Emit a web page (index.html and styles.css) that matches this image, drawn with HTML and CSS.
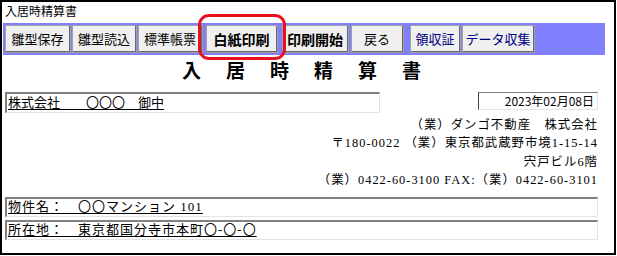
FILE: index.html
```html
<!DOCTYPE html>
<html lang="ja">
  <head>
    <meta charset="UTF-8" />
    <title>入居時精算書</title>
    <link rel="stylesheet" href="styles.css">
  </head>
  <body>
    <div class="frame">
      <div class="app_title">入居時精算書</div>

      <div class="toolbar">
        <button class="btn w66">雛型保存</button>
        <button class="btn w65">雛型読込</button>
        <button class="btn w65 gap2">標準帳票</button>
        <span class="mark_wrap">
          <button class="btn w72 bold">白紙印刷</button>
          <span class="mark_ring"></span>
        </span>
        <button class="btn w67 bold gap4">印刷開始</button>
        <button class="btn w53">戻る</button>
        <button class="btn w51 navy gap6">領収証</button>
        <button class="btn w73 navy">データ収集</button>
      </div>

      <div class="doc">
        <h1 class="doc_title">入居時精算書</h1>

        <div class="row_top">
          <div class="inset company"><u>株式会社　　〇〇〇　御中</u></div>
          <div class="date_box">2023年02月08日</div>
        </div>

        <div class="sender">
          <p>（業）ダンゴ不動産　株式会社</p>
          <p>〒180-0022 （業）東京都武蔵野市境1-15-14</p>
          <p>宍戸ビル6階</p>
          <p>（業）0422-60-3100 FAX:（業）0422-60-3101</p>
        </div>

        <div class="inset line"><u>物件名：　〇〇マンション 101</u></div>
        <div class="inset line"><u>所在地：　東京都国分寺市本町〇-〇-〇</u></div>
      </div>
    </div>
  </body>
</html>
```

FILE: styles.css
```css
* {
  box-sizing: border-box;
}
body {
  margin: 0;
  background: #fff;
  font-family: "Noto Sans CJK JP", sans-serif;
  color: #000;
}
.frame {
  width: 616px;
  height: 255px;
  border: 2px solid #000;
  padding-left: 1px;
}
.app_title {
  font-size: 12px;
  line-height: 15px;
  height: 21px;
  padding: 1px 0 0 2px;
}

/* toolbar */
.toolbar {
  width: 602px;
  height: 32px;
  background: #8080ff;
  display: flex;
  align-items: center;
  padding: 0 2px;
}
.btn {
  height: 28px;
  margin: 0 1px 0 0;
  padding: 0;
  font-family: "Noto Sans CJK JP", sans-serif;
  font-size: 13px;
  color: #000;
  background: #f0f0f0;
  border-top: 1px solid #fff;
  border-left: 1px solid #fff;
  border-right: 2px solid #696969;
  border-bottom: 2px solid #696969;
  outline: 1px solid #a0a0a0;
  outline-offset: -1px;
}
.btn.bold {
  font-weight: bold;
  font-size: 14px;
}
.btn.navy {
  color: #000080;
}
.btn.gap2 { margin-right: 3px; }
.btn.gap4 { margin-right: 2px; }
.btn.gap6 { margin-left: 5px; }
.w51 { width: 51px; }
.w53 { width: 53px; }
.w65 { width: 65px; }
.w66 { width: 66px; }
.w67 { width: 67px; }
.w72 { width: 72px; }
.w73 { width: 73px; }

.mark_wrap {
  position: relative;
  display: flex;
  margin-right: 4px;
}
.mark_wrap .btn {
  margin: 0;
}
.mark_ring {
  position: absolute;
  left: -8px;
  right: -8px;
  top: -11px;
  bottom: -7px;
  border: 3px solid #e8121e;
  border-radius: 11px;
}

/* document */
.doc {
  padding: 0 16px 0 2px;
}
.doc_title {
  margin: 4px 0 0;
  padding-left: 25px;
  text-align: center;
  font-size: 19px;
  line-height: 22px;
  letter-spacing: 25px;
  font-weight: bold;
}
.row_top {
  display: flex;
  justify-content: space-between;
  align-items: flex-start;
  margin-top: 11px;
}
.inset {
  border-top: 2px solid #808080;
  border-left: 2px solid #808080;
  border-right: 1px solid #e3e3e3;
  border-bottom: 1px solid #e3e3e3;
  font-size: 13px;
  line-height: 16px;
  padding: 0 0 0 1px;
  white-space: pre;
}
.inset u {
  text-underline-offset: 2px;
}
.company {
  width: 375px;
  height: 21px;
}
.date_box {
  width: 120px;
  height: 18px;
  border-top: 1px solid #808080;
  border-left: 1px solid #404040;
  border-right: 1px solid #e3e3e3;
  border-bottom: 1px solid #e3e3e3;
  font-size: 12px;
  line-height: 15px;
  text-align: right;
  padding-right: 3px;
}
.sender {
  margin-top: 3px;
  text-align: right;
  padding-right: 0;
  font-family: "Liberation Serif", "Noto Sans CJK JP", serif;
  font-size: 12.4px;
  letter-spacing: 1px;
}
.sender p {
  margin: 0;
  line-height: 18.3px;
}
.line {
  height: 20px;
  margin-top: 3px;
  font-family: "Liberation Serif", "Noto Sans CJK JP", serif;
  letter-spacing: 1px;
}
.sender + .line {
  margin-top: 8px;
}
```
